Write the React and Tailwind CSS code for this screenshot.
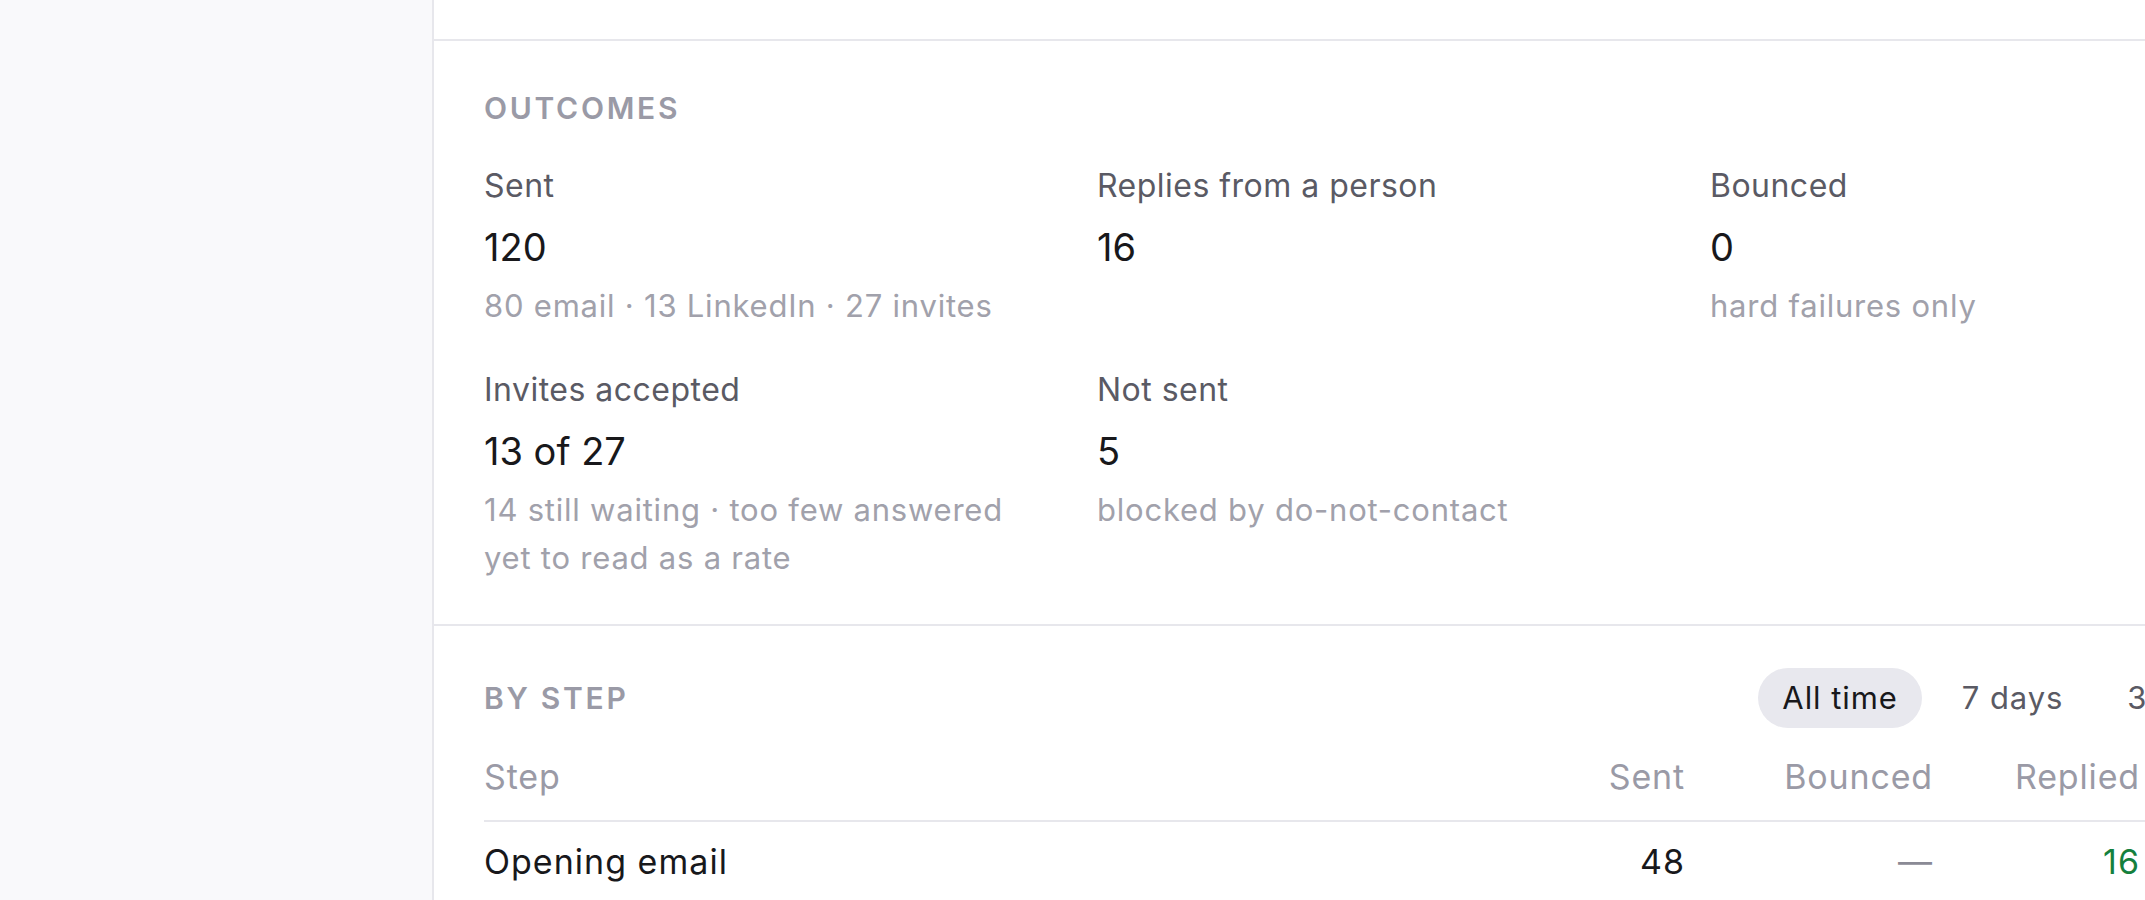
import { useState } from 'react'

const outcomes = [
  { label: 'Sent', value: '120', note: '80 email · 13 LinkedIn · 27 invites' },
  { label: 'Replies from a person', value: '16' },
  { label: 'Bounced', value: '0', note: 'hard failures only' },
  { label: 'Invites accepted', value: '13 of 27', note: '14 still waiting · too few answered yet to read as a rate' },
  { label: 'Not sent', value: '5', note: 'blocked by do-not-contact' },
]

const ranges = ['All time', '7 days', '30 days']

const steps = [
  { name: 'Opening email', sent: 48, bounced: null, replied: 16, rate: '33%' },
  { name: 'Follow-up email', sent: 32, bounced: null, replied: null, rate: null },
  { name: 'LinkedIn invite', sent: 27, bounced: null, replied: null, rate: null },
  { name: 'LinkedIn message', sent: 13, bounced: null, replied: null, rate: null },
]

// step column, then the numeric columns, all right aligned
const cols = 'grid grid-cols-[953px_248px_248px_207px_135px]'

function Dash() {
  return <span className="text-[#8a8a95]">—</span>
}

function SectionTitle({ children }) {
  return (
    <h2 className="text-[30px] leading-[40px] font-semibold uppercase tracking-[0.09em] text-[#9a9aa6]">{children}</h2>
  )
}

function Outcome({ label, value, note }) {
  return (
    <div>
      <div className="text-[32px] leading-[48px] tracking-[0.015em] text-[#5a5a64]">{label}</div>
      <div className="mt-[11px] text-[38px] leading-[52px] text-[#18181b]">{value}</div>
      {note && <div className="mt-[9px] text-[31px] leading-[48px] tracking-[0.025em] text-[#a1a1ab]">{note}</div>}
    </div>
  )
}

export default function App() {
  const [range, setRange] = useState('All time')

  return (
    <div className="flex h-screen w-screen overflow-hidden bg-white font-['Inter','Liberation_Sans',sans-serif]">
      <aside className="w-[434px] shrink-0 border-r-2 border-[#e7e7ec] bg-[#f9f9fb]" />

      <main className="w-[1891px] shrink-0">
        <div className="h-[41px] border-b-2 border-[#e7e7ec]" />

        <section className="border-b-2 border-[#e7e7ec] px-[50px] pt-[47px] pb-[42px]">
          <SectionTitle>Outcomes</SectionTitle>
          <div className="mt-[34px] grid grid-cols-[repeat(3,565px)] gap-x-12 gap-y-[36px]">
            {outcomes.map((o) => (
              <Outcome key={o.label} {...o} />
            ))}
          </div>
        </section>

        <section className="px-[50px] pt-[42px]">
          <div className="flex items-center justify-between">
            <SectionTitle>By step</SectionTitle>
            <div className="flex gap-4">
              {ranges.map((r) => (
                <button
                  key={r}
                  onClick={() => setRange(r)}
                  className={
                    r === range
                      ? 'rounded-full bg-[#e8e8ee] px-6 py-2.5 text-[31px] leading-[40px] tracking-[0.03em] text-[#18181b]'
                      : 'rounded-full px-6 py-2.5 text-[31px] leading-[40px] tracking-[0.03em] text-[#5a5a64]'
                  }
                >
                  {r}
                </button>
              ))}
            </div>
          </div>

          <div
            className={`${cols} mt-[25px] border-b-2 border-[#e7e7ec] pb-[19px] text-[34px] leading-[48px] tracking-[0.025em] text-[#9a9aa6]`}
          >
            <div>Step</div>
            <div className="text-right">Sent</div>
            <div className="text-right">Bounced</div>
            <div className="text-right">Replied</div>
            <div className="text-right">Rate</div>
          </div>

          {steps.map((s) => (
            <div
              key={s.name}
              className={`${cols} border-b-2 border-[#f0f0f3] py-4 text-[34px] leading-[48px] tracking-[0.03em] text-[#18181b]`}
            >
              <div>{s.name}</div>
              <div className="text-right">{s.sent}</div>
              <div className="text-right">{s.bounced ?? <Dash />}</div>
              <div className="text-right text-[#15803d]">{s.replied ?? <Dash />}</div>
              <div className="text-right">{s.rate ?? <Dash />}</div>
            </div>
          ))}
        </section>
      </main>
    </div>
  )
}
